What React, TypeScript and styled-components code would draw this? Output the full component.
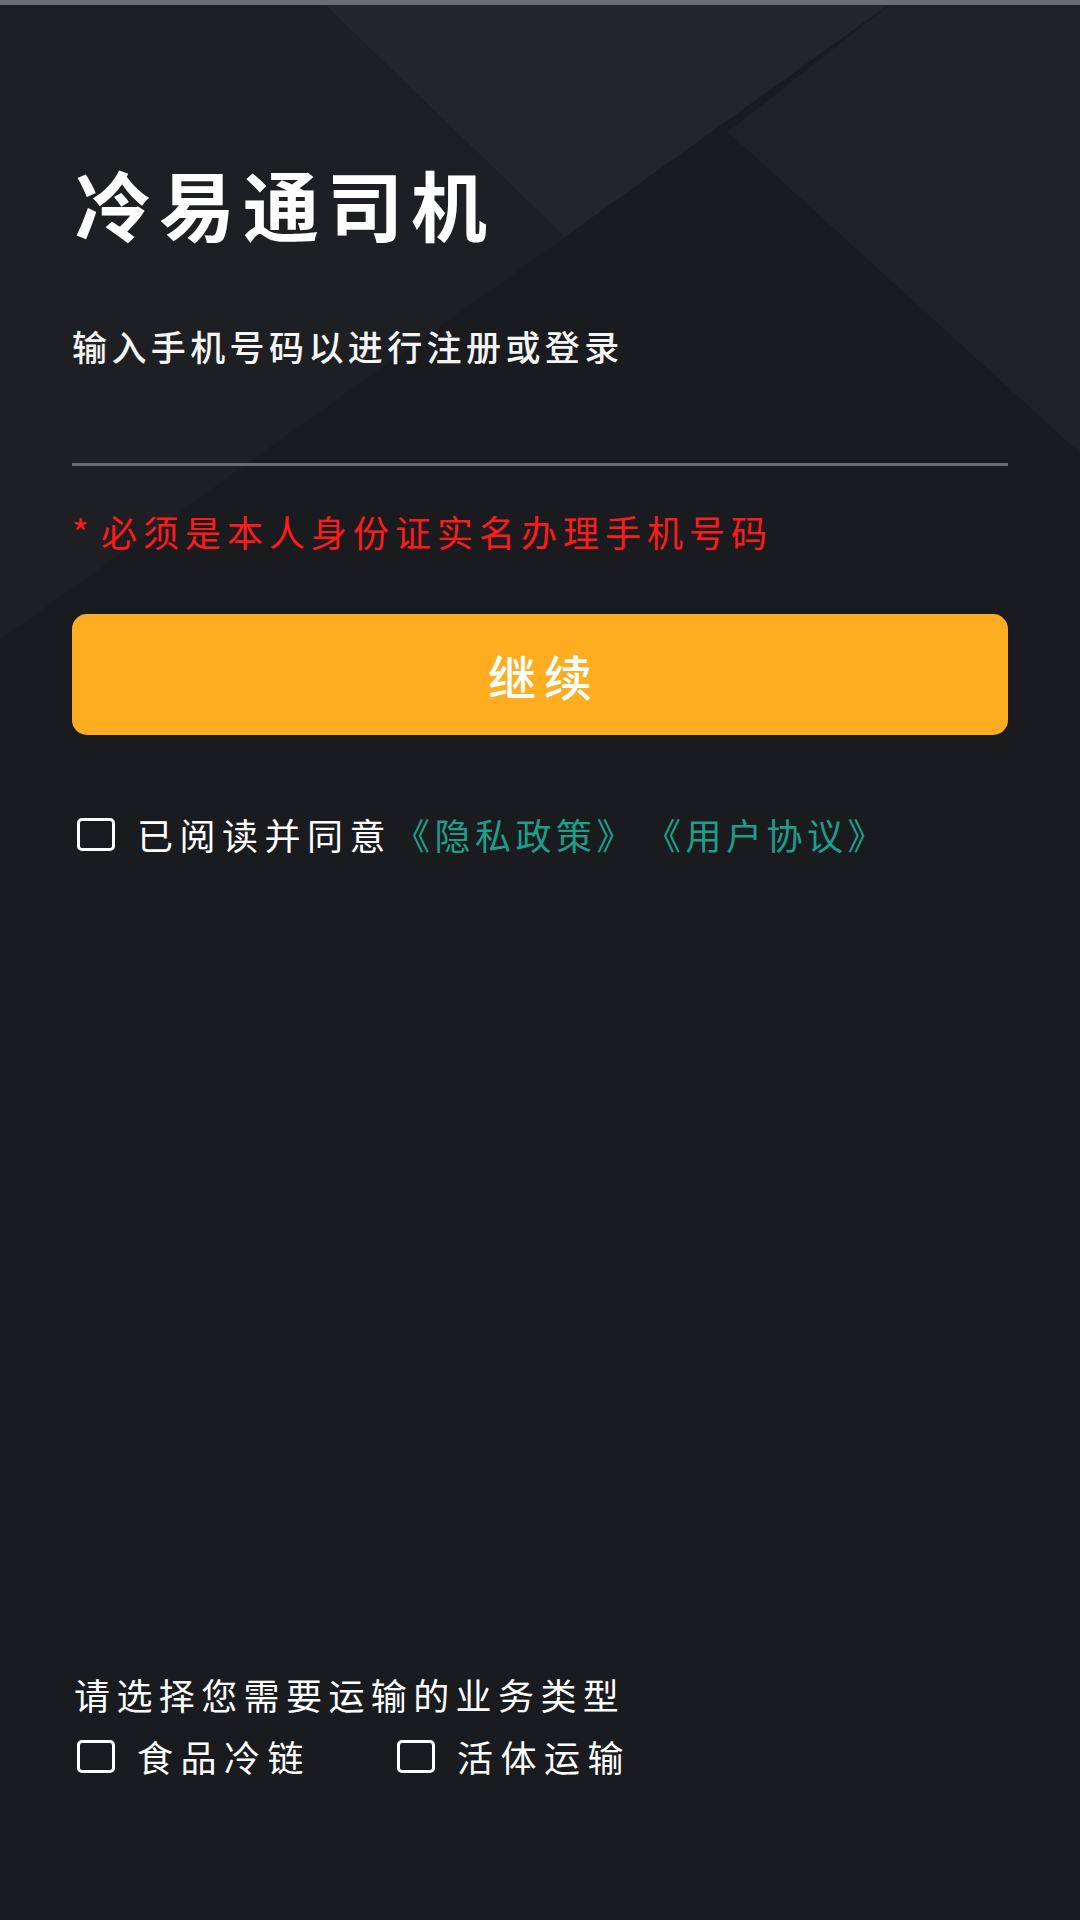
import React from "react";
import styled, { createGlobalStyle } from "styled-components";

const GlobalStyle = createGlobalStyle`
  html, body {
    margin: 0;
    padding: 0;
    background: #1a1b1f;
  }
  body {
    font-family: "Noto Sans CJK SC", "Noto Sans", sans-serif;
  }
  * { box-sizing: border-box; }
`;

const Page = styled.div`
  position: relative;
  width: 1080px;
  height: 1920px;
  overflow: hidden;
  background: #1a1b1f;
  display: flex;
  flex-direction: column;
`;

const Backdrop = styled.svg`
  position: absolute;
  inset: 0;
  width: 1080px;
  height: 1920px;
  z-index: 0;
`;

const TopBar = styled.div`
  position: relative;
  z-index: 1;
  height: 5px;
  background: #6d6d6f;
  flex: none;
`;

const Content = styled.div`
  position: relative;
  z-index: 1;
  flex: 1;
  display: flex;
  flex-direction: column;
  padding: 0 72px 146px 72px;
`;

const Title = styled.h1`
  margin: 160px 0 0 0;
  font-size: 76px;
  line-height: 1;
  font-weight: 700;
  color: #ffffff;
  letter-spacing: 8px;
  padding-left: 3px;
`;

const Subtitle = styled.div`
  margin-top: 87px;
  font-size: 35px;
  line-height: 1;
  font-weight: 500;
  color: #f4f4f4;
  letter-spacing: 4.4px;
`;

const PhoneInput = styled.input`
  margin-top: 27px;
  height: 76px;
  width: 100%;
  background: transparent;
  border: none;
  border-bottom: 3px solid #6b6c70;
  outline: none;
  color: #ffffff;
  font-family: inherit;
  font-size: 36px;
  padding: 0;
`;

const Warning = styled.div`
  margin-top: 47px;
  font-size: 36px;
  line-height: 1;
  color: #ff1a1a;
  letter-spacing: 6px;
`;

const Asterisk = styled.span`
  letter-spacing: 2px;
`;

const ContinueButton = styled.button`
  margin-top: 65px;
  height: 121px;
  width: 100%;
  border: none;
  border-radius: 15px;
  background: #fdad1f;
  color: #ffffff;
  font-family: inherit;
  font-size: 48px;
  font-weight: 500;
  letter-spacing: 8px;
  text-indent: 8px;
  display: flex;
  align-items: center;
  justify-content: center;
  cursor: pointer;
`;

const CheckRow = styled.div<{ $top: number }>`
  margin-top: ${(p) => p.$top}px;
  display: flex;
  align-items: center;
`;

const Option = styled.label<{ $width?: number }>`
  display: flex;
  align-items: center;
  width: ${(p) => (p.$width ? `${p.$width}px` : "auto")};
  cursor: pointer;
`;

const Box = styled.span`
  flex: none;
  width: 38px;
  height: 33px;
  border: 3px solid #ffffff;
  border-radius: 5px;
  margin: 0 22px 0 5px;
`;

const Label = styled.span`
  font-size: 36px;
  line-height: 1;
  color: #ffffff;
  letter-spacing: 6.5px;
  white-space: nowrap;
`;

const Link = styled.span`
  color: #1e9e88;
  letter-spacing: 4.5px;
`;

const LeadGap = styled.span`
  display: inline-block;
  width: 2px;
`;

const LinkGap = styled.span`
  display: inline-block;
  width: 8px;
`;

const BottomSection = styled.div`
  margin-top: auto;
  display: flex;
  flex-direction: column;
`;

const BottomLabel = styled.div`
  font-size: 36px;
  line-height: 1;
  color: #ffffff;
  letter-spacing: 6.4px;
  padding-left: 2px;
`;

const OptionLabel = styled(Label)`
  letter-spacing: 7.5px;
`;

export default function App() {
  return (
    <>
      <GlobalStyle />
      <Page>
        <Backdrop viewBox="0 0 1080 1920" preserveAspectRatio="none">
          <rect x="0" y="0" width="1080" height="1920" fill="#1a1b1f" />
          <polygon points="0,0 320,0 565,237 0,640" fill="#1e1f23" />
          <polygon points="320,0 895,0 565,237" fill="#242529" />
          <polygon points="895,0 1080,0 1080,453 728,132" fill="#202125" />
        </Backdrop>
        <TopBar />
        <Content>
          <Title>冷易通司机</Title>
          <Subtitle>输入手机号码以进行注册或登录</Subtitle>
          <PhoneInput type="tel" aria-label="手机号码" />
          <Warning>
            <Asterisk>* </Asterisk>必须是本人身份证实名办理手机号码
          </Warning>
          <ContinueButton>继续</ContinueButton>
          <CheckRow $top={81}>
            <Option>
              <Box />
              <Label>
                已阅读并同意
                <LeadGap />
                <Link>《隐私政策》</Link>
                <LinkGap />
                <Link>《用户协议》</Link>
              </Label>
            </Option>
          </CheckRow>
          <BottomSection>
            <BottomLabel>请选择您需要运输的业务类型</BottomLabel>
            <CheckRow $top={26}>
              <Option $width={320}>
                <Box />
                <OptionLabel>食品冷链</OptionLabel>
              </Option>
              <Option>
                <Box />
                <OptionLabel>活体运输</OptionLabel>
              </Option>
            </CheckRow>
          </BottomSection>
        </Content>
      </Page>
    </>
  );
}
